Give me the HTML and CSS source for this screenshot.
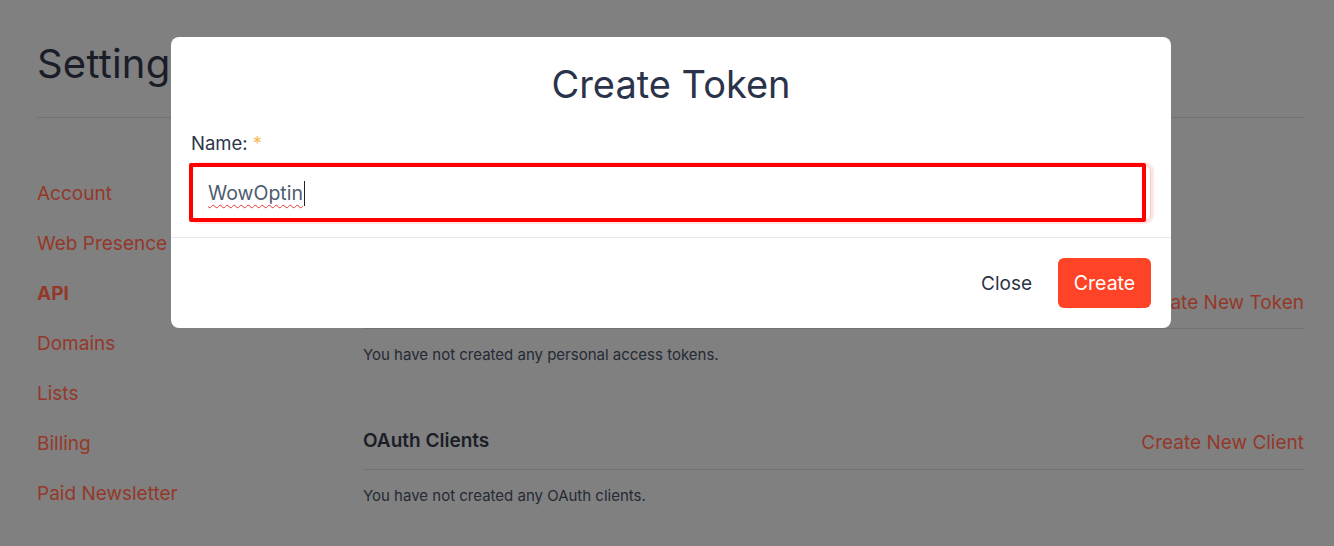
FILE: index.html
```html
<!DOCTYPE html>
<html lang="en">
<head>
<meta charset="utf-8">
<title>Settings - API</title>
<link rel="stylesheet" href="styles.css">
</head>
<body>
<div class="page">
  <h1 class="page-title">Settings</h1>
  <div class="rule"></div>
  <div class="layout">
    <nav class="sidebar">
      <a class="nav-link">Account</a>
      <a class="nav-link">Web Presence</a>
      <a class="nav-link active">API</a>
      <a class="nav-link">Domains</a>
      <a class="nav-link">Lists</a>
      <a class="nav-link">Billing</a>
      <a class="nav-link">Paid Newsletter</a>
    </nav>
    <main class="content">
      <section class="section first">
        <div class="section-head">
          <h2 class="section-title">Personal Access Tokens</h2>
          <a class="section-action">Create New Token</a>
        </div>
        <p class="section-empty">You have not created any personal access tokens.</p>
      </section>
      <section class="section second">
        <div class="section-head">
          <h2 class="section-title">OAuth Clients</h2>
          <a class="section-action">Create New Client</a>
        </div>
        <p class="section-empty">You have not created any OAuth clients.</p>
      </section>
    </main>
  </div>
</div>

<div class="backdrop"></div>

<div class="modal">
  <div class="modal-body">
    <h2 class="modal-title">Create Token</h2>
    <label class="field-label">Name: <span class="req">*</span></label>
    <div class="input-wrap">
      <div class="input"><span class="typed">WowOptin</span><span class="caret"></span></div>
      <div class="annotation"></div>
    </div>
  </div>
  <div class="modal-footer">
    <button class="btn-close">Close</button>
    <button class="btn-create">Create</button>
  </div>
</div>
</body>
</html>
```
FILE: styles.css
```css
* { box-sizing: border-box; }
html, body { margin: 0; padding: 0; }
body {
  background: #ffffff;
  font-family: Inter, "Noto Sans", sans-serif;
  width: 1334px;
  height: 546px;
  overflow: hidden;
  position: relative;
}
.page {
  padding: 0 30px 0 37px;
  background: #808080;
  height: 546px;
}
.page-title {
  margin: 0;
  padding-top: 40px;
  height: 81px;
  font-size: 40px;
  font-weight: 400;
  line-height: 48px;
  color: #1a1d27;
  letter-spacing: 0.2px;
}
.rule {
  margin-top: 36px;
  height: 1px;
  background: #6e7378;
}
.layout {
  display: flex;
  padding-top: 62px;
}
.sidebar {
  width: 326px;
  display: flex;
  flex-direction: column;
}
.nav-link {
  font-size: 19px;
  line-height: 28px;
  height: 50px;
  color: #94382a;
}
.nav-link.active { font-weight: 700; }
.content { flex: 1; }
.section-head {
  display: flex;
  justify-content: space-between;
  align-items: center;
  border-bottom: 1px solid #6e7378;
  padding-bottom: 13px;
}
.section.first .section-head { padding-top: 107px; }
.section.second { margin-top: 62px; }
.section.second .section-head { padding-bottom: 14px; }
.section-title {
  margin: 0;
  font-size: 19px;
  font-weight: 600;
  line-height: 26px;
  color: #1b1e27;
}
.section-action {
  font-size: 19px;
  line-height: 28px;
  color: #94382a;
  position: relative;
  top: 2px;
}
.section-empty {
  margin: 16px 0 0;
  font-size: 15px;
  line-height: 20px;
  color: #252a36;
}

.backdrop {
  position: absolute;
  inset: 0;
  background: transparent;
}
.modal {
  position: absolute;
  left: 171px;
  top: 37px;
  width: 1000px;
  height: 291px;
  background: #ffffff;
  border-radius: 8px;
  display: flex;
  flex-direction: column;
}
.modal-body {
  padding: 23px 20px 16px 20px;
  border-bottom: 1px solid #e5e9ef;
}
.modal-title {
  margin: 0;
  text-align: center;
  font-size: 38px;
  font-weight: 400;
  line-height: 48px;
  color: #2a3349;
}
.field-label {
  display: block;
  margin-top: 22px;
  font-size: 18.5px;
  line-height: 26px;
  color: #2d3648;
}
.req { color: #f8b95a; }
.input-wrap {
  position: relative;
  margin-top: 9px;
}
.input {
  height: 56px;
  margin-left: 1px;
  border: 1px solid #f4c8c3;
  border-radius: 6px;
  box-shadow: 0 0 0 3px rgba(255, 60, 40, 0.12);
  padding: 0 15px;
  display: flex;
  align-items: center;
  font-size: 19.5px;
  color: #4d5c6e;
}
.typed {
  text-decoration: underline wavy #e53935;
  text-decoration-thickness: 1px;
  text-underline-offset: 4px;
}
.caret {
  display: inline-block;
  width: 1px;
  height: 25px;
  background: #1f2430;
  margin-left: 1px;
}
.annotation {
  position: absolute;
  left: -2px;
  top: -2px;
  width: 957px;
  height: 59px;
  border: 4px solid #ff0000;
  border-radius: 2px;
}
.modal-footer {
  flex: 1;
  display: flex;
  justify-content: flex-end;
  align-items: center;
  padding: 0 20px;
  gap: 12px;
}
.btn-close {
  background: none;
  border: none;
  font-family: inherit;
  font-size: 19px;
  color: #2b3446;
  padding: 0 14px;
  height: 50px;
}
.btn-create {
  background: #ff4326;
  border: none;
  border-radius: 6px;
  font-family: inherit;
  font-size: 19.5px;
  color: #ffffff;
  height: 50px;
  width: 93px;
  padding: 0;
}
```
